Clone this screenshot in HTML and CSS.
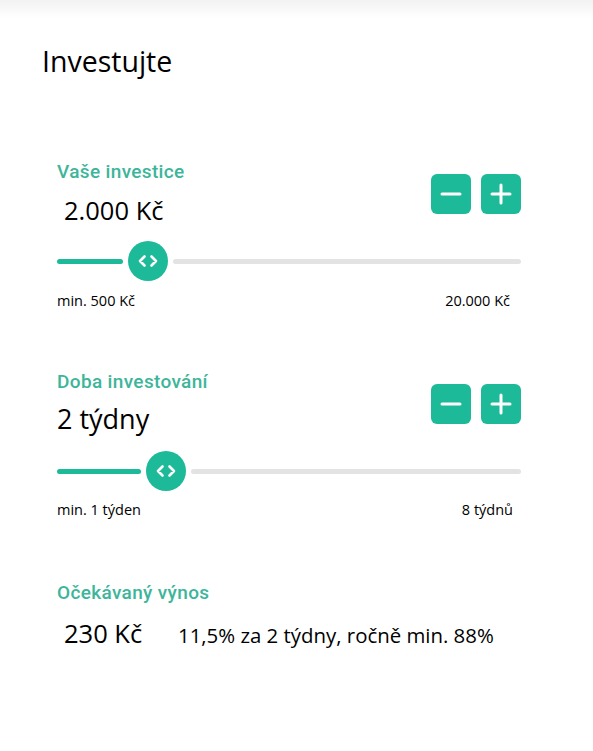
FILE: index.html
```html
<!DOCTYPE html>
<html lang="cs">
<head>
<meta charset="utf-8">
<link rel="stylesheet" href="styles.css">
</head>
<body>
<div class="topbar"></div>
<main class="page">
  <h1 class="title">Investujte</h1>

  <section class="field field-first">
    <div class="field-head">
      <div class="field-text">
        <div class="label">Vaše investice</div>
        <div class="value value-amount">2.000 Kč</div>
      </div>
      <div class="steppers">
        <button class="step" aria-label="minus"><svg viewBox="0 0 40 40" width="40" height="40"><path d="M11 20h18" stroke="#fff" stroke-width="3" stroke-linecap="round"/></svg></button>
        <button class="step" aria-label="plus"><svg viewBox="0 0 40 40" width="40" height="40"><path d="M11 20h18M20 11v18" stroke="#fff" stroke-width="3" stroke-linecap="round"/></svg></button>
      </div>
    </div>
    <div class="slider">
      <div class="fill" style="width:66px"></div>
      <div class="thumb"><svg viewBox="0 0 40 40" width="40" height="40"><path d="M16.5 15.5l-4.5 4.5 4.5 4.5M23.5 15.5l4.5 4.5-4.5 4.5" fill="none" stroke="#fff" stroke-width="2.6" stroke-linecap="round" stroke-linejoin="round"/></svg></div>
      <div class="rest"></div>
    </div>
    <div class="range"><span>min. 500 Kč</span><span>20.000 Kč</span></div>
  </section>

  <section class="field field-second">
    <div class="field-head">
      <div class="field-text">
        <div class="label">Doba investování</div>
        <div class="value value-weeks">2 týdny</div>
      </div>
      <div class="steppers">
        <button class="step" aria-label="minus"><svg viewBox="0 0 40 40" width="40" height="40"><path d="M11 20h18" stroke="#fff" stroke-width="3" stroke-linecap="round"/></svg></button>
        <button class="step" aria-label="plus"><svg viewBox="0 0 40 40" width="40" height="40"><path d="M11 20h18M20 11v18" stroke="#fff" stroke-width="3" stroke-linecap="round"/></svg></button>
      </div>
    </div>
    <div class="slider">
      <div class="fill" style="width:84px"></div>
      <div class="thumb"><svg viewBox="0 0 40 40" width="40" height="40"><path d="M16.5 15.5l-4.5 4.5 4.5 4.5M23.5 15.5l4.5 4.5-4.5 4.5" fill="none" stroke="#fff" stroke-width="2.6" stroke-linecap="round" stroke-linejoin="round"/></svg></div>
      <div class="rest"></div>
    </div>
    <div class="range range-weeks"><span>min. 1 týden</span><span>8 týdnů</span></div>
  </section>

  <section class="field field-third">
    <div class="label">Očekávaný výnos</div>
    <div class="result">
      <span class="value value-result">230 Kč</span>
      <span class="result-note">11,5% za 2 týdny, ročně min. 88%</span>
    </div>
  </section>
</main>
</body>
</html>
```
FILE: styles.css
```css
html, body {
  margin: 0;
  padding: 0;
  background: #fff;
}
body {
  font-family: "Open Sans", "Noto Sans", sans-serif;
  color: #000;
  width: 593px;
  height: 751px;
  overflow: hidden;
}
.topbar {
  height: 18px;
  background: linear-gradient(#f2f2f2, #fff);
}
.page {
  padding: 0 72px 0 42px;
}
.title {
  margin: 25px 0 0 0;
  font-weight: 400;
  font-size: 28.5px;
  line-height: 36px;
}
.field {
  padding-left: 15px;
}
.field-first {
  margin-top: 82px;
}
.field-second {
  margin-top: 61px;
}
.field-third {
  margin-top: 63px;
}
.field-head {
  display: flex;
  justify-content: space-between;
  align-items: flex-start;
}
.label {
  font-family: Roboto, "Noto Sans", sans-serif;
  font-weight: 500;
  font-size: 19px;
  letter-spacing: 0.35px;
  line-height: 22px;
  color: #3db59a;
}
.value {
  font-size: 25.5px;
  line-height: 32px;
}
.value-amount {
  margin-top: 11px;
  padding-left: 7px;
}
.value-weeks {
  margin-top: 9px;
  font-size: 27px;
  line-height: 34px;
}
.steppers {
  display: flex;
  gap: 10px;
  margin-top: 12.5px;
}
.step {
  width: 40px;
  height: 40px;
  padding: 0;
  border: 0;
  border-radius: 6px;
  background: #1cba98;
  display: flex;
  align-items: center;
  justify-content: center;
}
.step svg {
  display: block;
}
.slider {
  display: flex;
  align-items: center;
  margin-top: 15px;
  height: 40px;
}
.fill {
  height: 5px;
  border-radius: 3px;
  background: #1cba98;
}
.rest {
  flex: 1;
  height: 5px;
  border-radius: 3px;
  background: #e3e3e3;
}
.thumb {
  width: 40px;
  height: 40px;
  border-radius: 50%;
  background: #1cba98;
  margin: 0 5px;
  flex: none;
}
.thumb svg {
  display: block;
}
.range {
  display: flex;
  justify-content: space-between;
  padding-right: 11px;
  font-size: 14.5px;
  line-height: 18px;
  margin-top: 11px;
}
.range-weeks {
  margin-top: 10px;
  padding-right: 8px;
}
.result {
  display: flex;
  align-items: baseline;
  margin-top: 13px;
  padding-left: 7px;
}
.value-result {
  width: 114px;
}
.result-note {
  font-size: 20.4px;
}
```
